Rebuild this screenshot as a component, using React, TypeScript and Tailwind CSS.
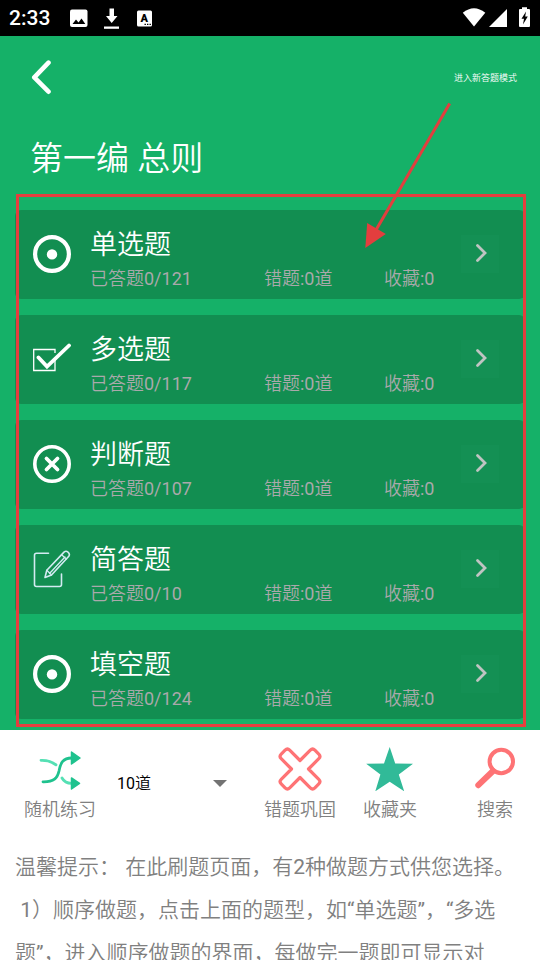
import type { ReactNode } from "react";

const questionTypes = [
  { name: "单选题", answered: "0/121", wrong: 0, saved: 0, icon: <RadioIcon /> },
  { name: "多选题", answered: "0/117", wrong: 0, saved: 0, icon: <CheckIcon /> },
  { name: "判断题", answered: "0/107", wrong: 0, saved: 0, icon: <CrossIcon /> },
  { name: "简答题", answered: "0/10", wrong: 0, saved: 0, icon: <EditIcon /> },
  { name: "填空题", answered: "0/124", wrong: 0, saved: 0, icon: <RadioIcon /> },
];

const tips =
  "温馨提示： 在此刷题页面，有2种做题方式供您选择。\n 1）顺序做题，点击上面的题型，如“单选题”，“多选题”，进入顺序做题的界面，每做完一题即可显示对";

function RadioIcon() {
  return (
    <svg viewBox="0 0 38 38" className="mt-[25px] size-[38px]" fill="none">
      <circle cx="19" cy="19" r="16.9" stroke="#fff" strokeWidth="4.2" />
      <circle cx="19" cy="19.4" r="5.2" fill="#fff" />
    </svg>
  );
}

function CheckIcon() {
  return (
    <svg viewBox="0 0 38 38" className="mt-[25px] size-[38px]" fill="none" stroke="#fff">
      <path d="M22 18V30.500H0.700V9.500H22V13" strokeWidth="1.300" />
      <path d="M5.500 17.500L14 26.500L36 5.500" strokeWidth="3.800" strokeLinecap="round" />
    </svg>
  );
}

function CrossIcon() {
  return (
    <svg viewBox="0 0 38 38" className="mt-[25px] size-[38px]" fill="none" stroke="#fff">
      <circle cx="19" cy="19" r="17.2" strokeWidth="3.6" />
      <path d="M13.5 13.5L24.5 24.5M24.5 13.5L13.5 24.5" strokeWidth="3.8" strokeLinecap="round" />
    </svg>
  );
}

function EditIcon() {
  return (
    <svg
      viewBox="0 0 38 38"
      className="mt-[25px] size-[38px]"
      fill="none"
      stroke="#d3ebf2"
      strokeWidth="1.6"
      strokeLinejoin="round"
      strokeLinecap="round"
    >
      <path d="M15.500 3.300H3.500Q1.500 3.300 1.500 5.300V34.500Q1.500 36.500 3.500 36.500H26.500Q28.500 36.500 28.500 34.500V24" />
      <path d="M31 2.100Q33 0.500 35 2.100Q37.300 4 35.800 6.200L18.500 25L12 27.500L13.800 20.300Z" />
      <path d="M28.500 4.700L33.500 9M32 7L16.500 23.500M13.800 20.300L18.500 25" strokeWidth="1.3" />
    </svg>
  );
}

function StatusBar() {
  return (
    <div className="flex h-9 items-center justify-between bg-black px-[9px] text-white">
      <div className="flex items-center">
        <span className="text-[21px] font-medium leading-9">2:33</span>
        <svg viewBox="70 0 84 36" className="ml-5 h-9 w-[84px]">
          <rect x="70" y="9.500" width="17.500" height="17.500" rx="2" fill="#fff" />
          <path d="M72.500 24L76 19.500L78.500 22.500L81.500 18.500L85.300 24Z" fill="#000" />
          <path d="M109.500 8.500H114V16H117.500L111.700 23L106 16H109.500Z" fill="#fff" />
          <path d="M104 26.500H119V28.800H104Z" fill="#fff" />
          <rect x="137" y="10.500" width="15" height="16" rx="1.500" fill="#fff" />
          <text x="140.500" y="22" fontSize="11" fontWeight="900" fill="#000">
            A
          </text>
          <path d="M144.500 23.700h1.400v1.400h-1.400zM147 23.700h1.400v1.400H147zM149.500 23.700h1.400v1.400h-1.400z" fill="#000" />
        </svg>
      </div>
      <svg viewBox="462 0 69 36" className="h-9 w-[69px]" fill="#fff">
        <path d="M462.800 12.800Q474 3.800 485.300 12.800L474 26.500Z" />
        <path d="M507 9V27H489Z" />
        <path d="M522 7.200H527V9H529Q530 9 530 10V26Q530 27 529 27H520Q519 27 519 26V10Q519 9 520 9H522Z" />
        <path d="M526 11.500L521.500 18.800H524L523 24.500L527.800 16.500H525.200Z" fill="#000" />
      </svg>
    </div>
  );
}

function Tool({ label, children }: { label: string; children: ReactNode }) {
  return (
    <button type="button" className="flex w-full flex-col items-center gap-[5px]">
      {children}
      <span className="whitespace-nowrap text-lg leading-7">{label}</span>
    </button>
  );
}

export default function App() {
  return (
    <div className="flex h-screen flex-col overflow-hidden bg-white font-['Roboto','Noto_Sans_CJK_SC_DemiLight','Noto_Sans_CJK_SC',sans-serif]">
      <StatusBar />

      <main className="relative shrink-0 bg-[#15b168] px-[15px] pb-[11px] text-white">
        <header className="flex items-center justify-between pl-4 pr-2 pt-5">
          <button type="button" aria-label="返回" className="h-11">
            <svg viewBox="0 0 20 36" className="h-9 w-5" fill="none">
              <path d="M17.500 2.700L3.300 17.400L17.500 31.700" stroke="#fff" strokeWidth="4.600" strokeLinecap="round" strokeLinejoin="round" />
            </svg>
          </button>
          <button type="button" className="text-[9px] leading-4">
            进入新答题模式
          </button>
        </header>
        <h1 className="mb-[26px] mt-[34px] pl-[15px] text-[33px] leading-[50px]">第一编 总则</h1>

        <div className="relative">
          <ul className="flex flex-col gap-4">
            {questionTypes.map((type) => (
              <li key={type.name}>
                <button
                  type="button"
                  className="flex h-[89px] w-full items-start rounded-md bg-[#128e51] pl-[18px] pr-[26px] text-left"
                >
                  {type.icon}
                  <span className="ml-[19px] mt-[15px] grid flex-1 grid-cols-[174fr_120fr_77fr] text-lg leading-7 text-[#aaa9ab]">
                    <span className="col-span-3 text-[27px] leading-10 text-white">{type.name}</span>
                    <span>已答题{type.answered}</span>
                    <span>错题:{type.wrong}道</span>
                    <span>收藏:{type.saved}</span>
                  </span>
                  <svg viewBox="0 0 38 38" className="mt-[25px] size-[38px] bg-[#149054]" fill="none">
                    <path d="M16.500 10.500L24 18L16.500 25.500" stroke="#bfc4c2" strokeWidth="2.800" strokeLinecap="round" />
                  </svg>
                </button>
              </li>
            ))}
          </ul>
          <div className="pointer-events-none absolute -bottom-2 -right-px -top-4 left-px border-[3px] border-[#e33e3e]" />
        </div>

        <svg viewBox="360 100 96 152" className="pointer-events-none absolute right-[84px] top-16 h-[152px] w-24">
          <path d="M449.700 103.500L376 230" stroke="#e33e3e" strokeWidth="3" />
          <path d="M365.300 248L367.200 223L385.800 234Z" fill="#e33e3e" />
        </svg>
      </main>

      <section className="grid shrink-0 grid-cols-[117fr_138fr_90fr_90fr_105fr] pt-[17px] text-[#808080]">
        <div className="pl-[3px]">
          <Tool label="随机练习">
            <svg viewBox="38 747 44 44" className="size-11" fill="none" strokeWidth="2.800" strokeLinecap="round">
              <path d="M41 760.300Q50 760 56 764.800M62 778Q65 783.500 72 783.300" stroke="#55e0b4" />
              <path d="M43 781.800C54 782 57.500 778 59 771C60.500 763 63 757.800 72 758" stroke="#1fc28e" />
              <path d="M71.500 752L80 758L71.500 764ZM71.500 778L79.500 783.300L71.500 789Z" fill="#1fc28e" stroke="#1fc28e" strokeWidth="1.500" strokeLinejoin="round" />
            </svg>
          </Tool>
        </div>
        <div className="relative mr-7 mt-[23px] h-7">
          <select aria-label="练习数量" className="h-7 w-full appearance-none bg-transparent text-base text-black">
            <option>10道</option>
          </select>
          <svg viewBox="0 0 14 7" className="pointer-events-none absolute right-0 top-2.5 h-[7px] w-3.5" fill="#737373">
            <path d="M0 0H14L7 7Z" />
          </svg>
        </div>
        <Tool label="错题巩固">
          <svg viewBox="278 747 44 44" className="size-11" fill="none">
            <path
              d="M300 760.500L310.300 750.200Q312.600 747.900 314.900 750.200L318.800 754.100Q321.100 756.400 318.800 758.700L308.500 769L318.800 779.300Q321.100 781.600 318.800 783.900L314.900 787.800Q312.600 790.100 310.300 787.800L300 777.500L289.700 787.800Q287.400 790.100 285.100 787.800L281.200 783.900Q278.900 781.600 281.200 779.300L291.500 769L281.200 758.700Q278.900 756.400 281.200 754.100L285.100 750.200Q287.400 747.900 289.700 750.200Z"
              stroke="#fe7375"
              strokeWidth="3.200"
              strokeLinejoin="round"
            />
          </svg>
        </Tool>
        <Tool label="收藏夹">
          <svg viewBox="366 747 48 44" className="h-11 w-12" fill="#31ba98">
            <path d="M389.700 747L395.200 763.500L413 763.700L398.800 774.500L404.200 791.300L389.700 781.700L375.300 791.300L380.400 774.500L366.200 763.700L384 763.500Z" />
          </svg>
        </Tool>
        <div className="pl-[15px]">
          <Tool label="搜索">
            <svg viewBox="473 747 44 44" className="size-11" fill="none" stroke="#fe7375">
              <circle cx="501.300" cy="761.500" r="11.700" strokeWidth="4" />
              <path d="M493 771L478.300 785.200" strokeWidth="6" strokeLinecap="round" />
            </svg>
          </Tool>
        </div>
      </section>

      <p className="mt-[22px] whitespace-pre-wrap px-[15px] text-[21px] leading-[43px] text-[#808080]">{tips}</p>
    </div>
  );
}
